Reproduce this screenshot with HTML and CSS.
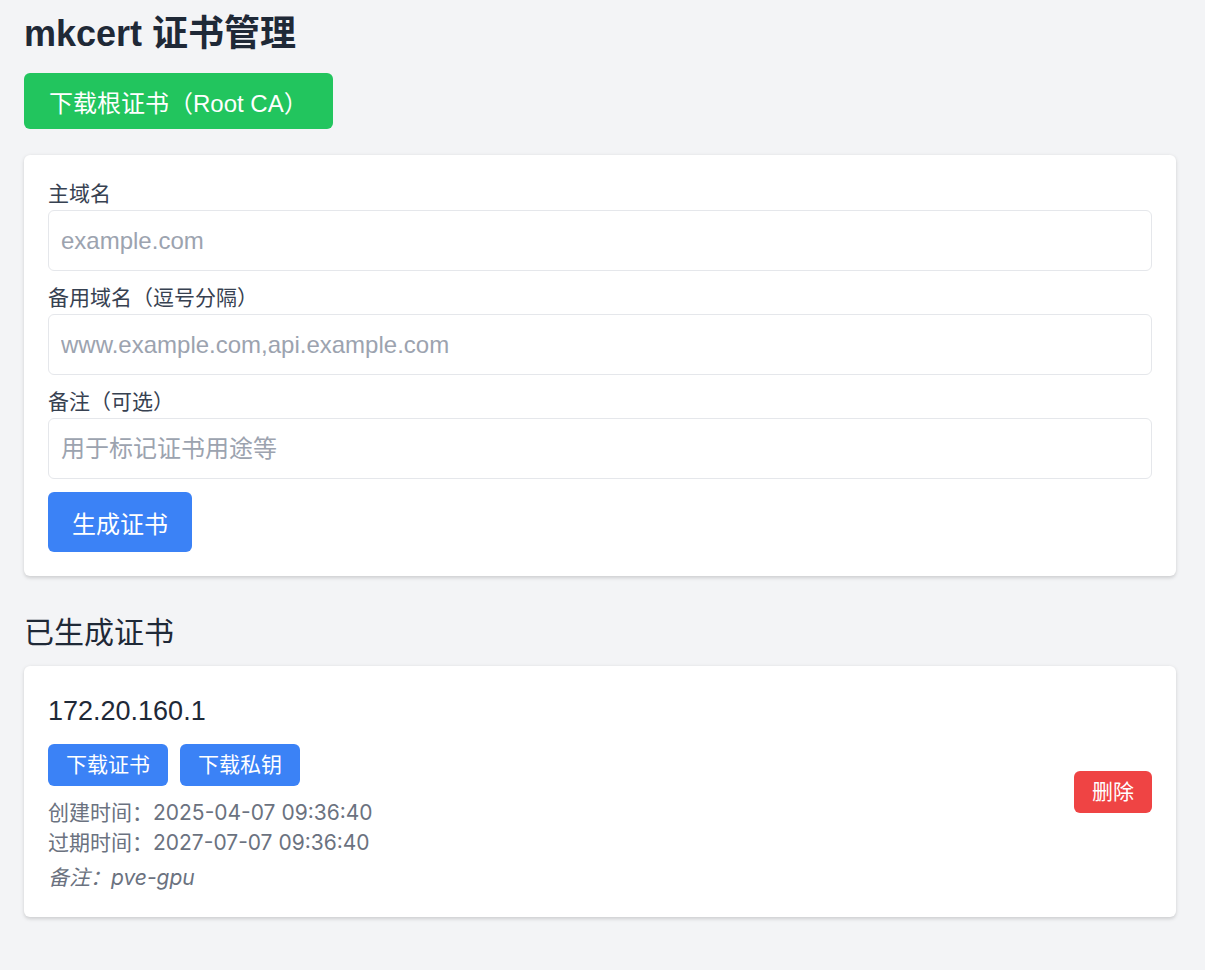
FILE: index.html
```html
<!DOCTYPE html>
<html lang="zh-CN">
<head>
<meta charset="utf-8">
<title>mkcert 证书管理</title>
<link rel="stylesheet" href="styles.css">
</head>
<body>
<div class="page">
  <h1 class="title">mkcert 证书管理</h1>
  <div class="root-row"><a class="btn btn-green">下载根证书（Root CA）</a></div>

  <form class="card form">
    <div class="field">
      <label class="label">主域名</label>
      <input class="input" type="text" placeholder="example.com">
    </div>
    <div class="field">
      <label class="label">备用域名（逗号分隔）</label>
      <input class="input" type="text" placeholder="www.example.com,api.example.com">
    </div>
    <div class="field">
      <label class="label">备注（可选）</label>
      <input class="input" type="text" placeholder="用于标记证书用途等">
    </div>
    <div class="form-actions"><button type="button" class="btn btn-blue">生成证书</button></div>
  </form>

  <h2 class="section-title">已生成证书</h2>

  <div class="card cert">
    <div class="cert-main">
      <div class="cert-name">172.20.160.1</div>
      <div class="cert-actions">
        <a class="btn-sm btn-blue">下载证书</a>
        <a class="btn-sm btn-blue">下载私钥</a>
      </div>
      <div class="meta">
        <div>创建时间：2025-04-07 09:36:40</div>
        <div>过期时间：2027-07-07 09:36:40</div>
      </div>
      <div class="note">备注：pve-gpu</div>
    </div>
    <button type="button" class="btn-sm btn-red">删除</button>
  </div>
</div>
</body>
</html>
```

FILE: styles.css
```css
* { box-sizing: border-box; }

body {
  margin: 0;
  background: #f3f4f6;
  font-family: "Liberation Sans", "Noto Sans CJK SC", sans-serif;
  color: #1f2937;
}

.page {
  width: 1152px;
  margin-left: 24px;
  padding-top: 10px;
  padding-bottom: 40px;
}

.title {
  margin: 0 0 15px;
  font-size: 36px;
  line-height: 48px;
  font-weight: 700;
  color: #1f2937;
}

.root-row {
  display: flex;
  margin-bottom: 26px;
}

.btn {
  display: inline-flex;
  align-items: center;
  justify-content: center;
  border: none;
  border-radius: 6px;
  color: #ffffff;
  font-family: inherit;
  font-size: 24px;
  cursor: pointer;
  text-decoration: none;
}

.btn-green {
  height: 56px;
  padding: 0 25px 0 25px;
  background: #22c55e;
}

.btn-blue { background: #3b82f6; }
.btn-red { background: #ef4444; }

.card {
  background: #ffffff;
  border-radius: 6px;
  box-shadow: 0 1.5px 4.5px rgba(0, 0, 0, 0.1), 0 1.5px 3px rgba(0, 0, 0, 0.06);
  padding: 24px;
}

.form {
  display: flex;
  flex-direction: column;
  gap: 12px;
  margin: 0;
}

.field {
  display: flex;
  flex-direction: column;
}

.label {
  font-size: 21px;
  line-height: 30px;
  margin-bottom: 1px;
  color: #374151;
}

.input {
  height: 61px;
  padding: 0 12px;
  border: 1px solid #e5e7eb;
  border-radius: 6px;
  font-family: inherit;
  font-size: 24px;
  color: #1f2937;
  outline: none;
}

.input::placeholder { color: #9ca3af; opacity: 1; }

.form-actions { display: flex; padding-top: 1px; }

.form-actions .btn {
  height: 60px;
  padding: 0 24px;
}

.section-title {
  margin: 36px 0 12px;
  font-size: 30px;
  line-height: 42px;
  font-weight: 400;
  color: #1f2937;
}

.cert {
  display: flex;
  justify-content: space-between;
  align-items: center;
}

.cert-name {
  font-size: 27px;
  line-height: 42px;
  color: #1f2937;
}

.cert-actions {
  display: flex;
  gap: 12px;
  margin-top: 12px;
}

.btn-sm {
  display: inline-flex;
  align-items: center;
  height: 42px;
  padding: 0 18px;
  border: none;
  border-radius: 6px;
  color: #ffffff;
  font-family: "Liberation Sans", "Noto Sans CJK SC", sans-serif;
  font-size: 21px;
  line-height: 30px;
  cursor: pointer;
}

.meta {
  margin-top: 12px;
  font-family: Inter, "Noto Sans CJK SC", sans-serif;
  font-size: 21px;
  line-height: 30px;
  color: #6b7280;
}

.note {
  margin-top: 5px;
  font-family: Inter, "Noto Sans CJK SC", sans-serif;
  font-size: 21px;
  line-height: 30px;
  font-style: italic;
  color: #6b7280;
}
```
